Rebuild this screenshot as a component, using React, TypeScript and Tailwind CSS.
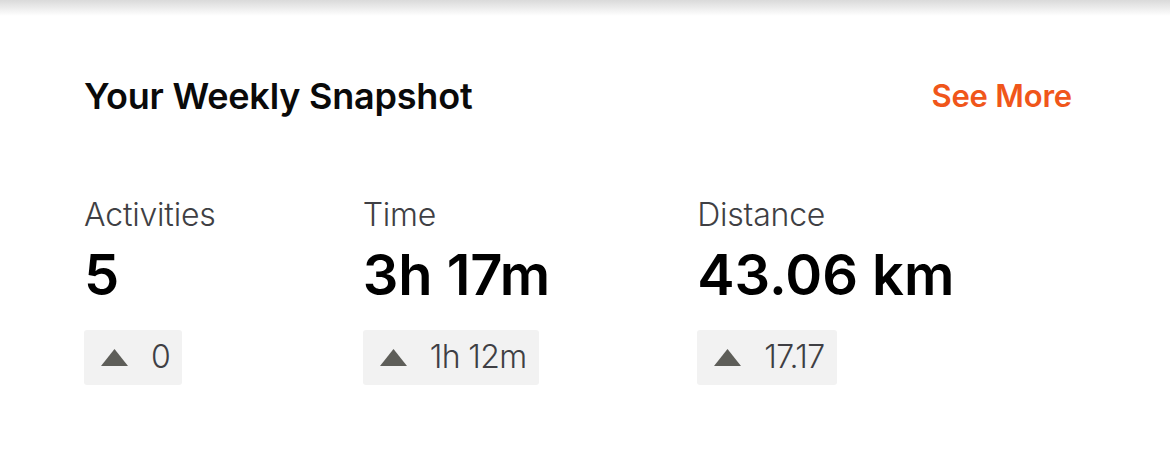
type Stat = {
  label: string;
  value: string;
  change: string;
};

const stats: Stat[] = [
  { label: "Activities", value: "5", change: "0" },
  { label: "Time", value: "3h 17m", change: "1h 12m" },
  { label: "Distance", value: "43.06 km", change: "17.17" },
];

function UpTriangle() {
  return (
    <svg width="27" height="17" viewBox="0 0 27 17" className="shrink-0">
      <path d="M13.5 0 L27 17 L0 17 Z" fill="#5e5e59" />
    </svg>
  );
}

function StatBlock({ stat }: { stat: Stat }) {
  return (
    <div className="flex flex-col items-start">
      <div className="text-[32px] leading-[36px] font-light text-[#3f3f44] tracking-[-0.2px]">
        {stat.label}
      </div>
      <div className="mt-[14px] text-[56px] leading-[56px] font-semibold text-black">
        {stat.value}
      </div>
      <div className="mt-[27px] h-[55px] flex items-center gap-[23px] bg-[#f2f2f2] rounded-[3px] pl-[17px] pr-[12px]">
        <UpTriangle />
        <span className="text-[32px] font-light text-[#3f3f44] tracking-[-0.6px]">
          {stat.change}
        </span>
      </div>
    </div>
  );
}

export default function App() {
  return (
    <div
      className="w-[1170px] h-[455px] bg-white overflow-hidden"
      style={{ fontFamily: "Inter, 'Noto Sans', sans-serif" }}
    >
      <div className="h-[16px] bg-gradient-to-b from-[#dadada] to-white" />
      <div className="px-[84px] pt-[57px]">
        <div className="flex items-center justify-between pr-[14px]">
          <h2 className="text-[36px] leading-[44px] font-semibold text-[#0a0a0a] tracking-[-0.2px]">
            Your Weekly Snapshot
          </h2>
          <button className="text-[31px] font-semibold text-[#f0561a] tracking-[-0.2px]">
            See More
          </button>
        </div>
        <div className="mt-[77px] flex gap-[147px]">
          {stats.map((s) => (
            <StatBlock key={s.label} stat={s} />
          ))}
        </div>
      </div>
    </div>
  );
}
